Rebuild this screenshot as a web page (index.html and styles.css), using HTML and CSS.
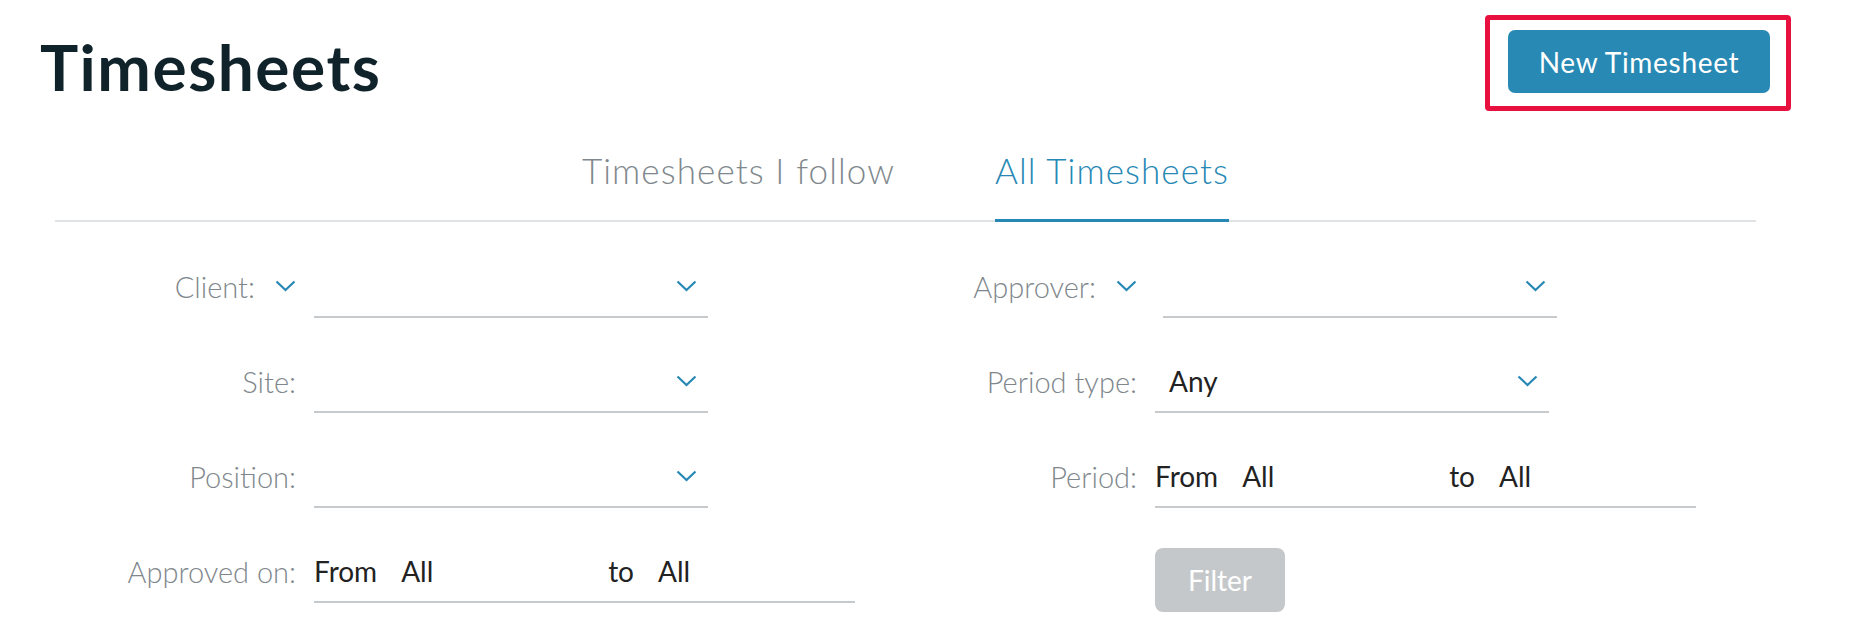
FILE: index.html
```html
<!DOCTYPE html>
<html lang="en">
<head>
  <meta charset="UTF-8" />
  <meta name="viewport" content="width=device-width, initial-scale=1.0"/>
  <title>Timesheets</title>
  <link rel="stylesheet" href="styles.css">
</head>
<body>
  <header class="page-header">
    <h1 class="page-title">Timesheets</h1>
    <div class="highlight">
      <button class="btn btn-primary" type="button">New Timesheet</button>
    </div>
  </header>

  <nav class="tabs">
    <a class="tab" href="#">Timesheets I follow</a>
    <a class="tab active" href="#">All Timesheets</a>
  </nav>

  <form class="filters">
    <!-- row 1 -->
    <label class="filter-label">Client:
      <svg class="chevron" width="21" height="12" viewBox="0 0 21 12"><polyline points="1.5,1.5 10.5,10 19.5,1.5"/></svg>
    </label>
    <div class="select">
      <span class="select-value"></span>
      <svg class="chevron" width="21" height="12" viewBox="0 0 21 12"><polyline points="1.5,1.5 10.5,10 19.5,1.5"/></svg>
    </div>
    <label class="filter-label">Approver:
      <svg class="chevron" width="21" height="12" viewBox="0 0 21 12"><polyline points="1.5,1.5 10.5,10 19.5,1.5"/></svg>
    </label>
    <div class="select select-shift">
      <span class="select-value"></span>
      <svg class="chevron" width="21" height="12" viewBox="0 0 21 12"><polyline points="1.5,1.5 10.5,10 19.5,1.5"/></svg>
    </div>

    <!-- row 2 -->
    <label class="filter-label">Site:</label>
    <div class="select">
      <span class="select-value"></span>
      <svg class="chevron" width="21" height="12" viewBox="0 0 21 12"><polyline points="1.5,1.5 10.5,10 19.5,1.5"/></svg>
    </div>
    <label class="filter-label">Period type:</label>
    <div class="select">
      <span class="select-value">Any</span>
      <svg class="chevron" width="21" height="12" viewBox="0 0 21 12"><polyline points="1.5,1.5 10.5,10 19.5,1.5"/></svg>
    </div>

    <!-- row 3 -->
    <label class="filter-label">Position:</label>
    <div class="select">
      <span class="select-value"></span>
      <svg class="chevron" width="21" height="12" viewBox="0 0 21 12"><polyline points="1.5,1.5 10.5,10 19.5,1.5"/></svg>
    </div>
    <label class="filter-label">Period:</label>
    <div class="range">
      <span class="range-word">From</span>
      <span class="range-value range-from">All</span>
      <span class="range-word">to</span>
      <span class="range-value">All</span>
    </div>

    <!-- row 4 -->
    <label class="filter-label">Approved on:</label>
    <div class="range">
      <span class="range-word">From</span>
      <span class="range-value range-from">All</span>
      <span class="range-word">to</span>
      <span class="range-value">All</span>
    </div>
    <span></span>
    <button class="btn btn-filter" type="button" disabled>Filter</button>
  </form>
</body>
</html>
```

FILE: styles.css
```css
body {
  margin: 0;
  background: #fff;
  font-family: Lato, "Liberation Sans", sans-serif;
  color: #222;
}
.page-header {
  display: flex;
  justify-content: space-between;
  align-items: flex-start;
  padding: 15px 61px 0 40px;
}
.page-title {
  margin: 20px 0 0;
  font-size: 64px;
  line-height: 64px;
  font-weight: 700;
  letter-spacing: 1.5px;
  color: #10232a;
}
.highlight {
  border: 5px solid #e8103f;
  border-radius: 4px;
  padding: 10px 16px 13px 18px;
}
.btn {
  font-family: Lato, "Liberation Sans", sans-serif;
  border: none;
  color: #fff;
  cursor: pointer;
}
.btn-primary {
  display: block;
  width: 262px;
  height: 63px;
  background: #2889b4;
  border-radius: 7px;
  font-size: 28px;
  letter-spacing: 0.7px;
}
.tabs {
  display: flex;
  justify-content: center;
  gap: 100px;
  margin: 38px 96px 0 55px;
  border-bottom: 2px solid #dfe3e6;
}
.tab {
  font-size: 35px;
  font-weight: 300;
  line-height: 42px;
  letter-spacing: 1.1px;
  color: #80888d;
  text-decoration: none;
  padding-bottom: 28px;
  border-bottom: 3px solid transparent;
  margin-bottom: -2px;
}
.tab.active {
  color: #2788b5;
  border-bottom-color: #2788b5;
}
.filters {
  display: grid;
  grid-template-columns: 296px 541px 264px 1fr;
  column-gap: 18px;
  row-gap: 45px;
  margin-top: 46px;
}
.filter-label {
  display: flex;
  justify-content: flex-end;
  align-items: center;
  gap: 20px;
  height: 36px;
  font-size: 29px;
  font-weight: 300;
  color: #80878c;
}
.chevron {
  flex: none;
  fill: none;
  stroke: #2788b5;
  stroke-width: 2.2;
}
.select,
.range {
  display: flex;
  align-items: center;
  height: 36px;
  padding-bottom: 12px;
  border-bottom: 2px solid #c6cacd;
  font-size: 28px;
  color: #222;
}
.select {
  width: 369px;
  justify-content: space-between;
  padding-left: 14px;
  padding-right: 11px;
}
.select-shift {
  margin-left: 8px;
}
.range {
  width: 541px;
}
.range-value {
  margin-left: 24px;
}
.range-from {
  width: 207px;
}
.btn-filter {
  width: 130px;
  height: 64px;
  margin-top: -5px;
  background: #c5c8cb;
  border-radius: 8px;
  font-size: 28px;
  cursor: default;
}
```
